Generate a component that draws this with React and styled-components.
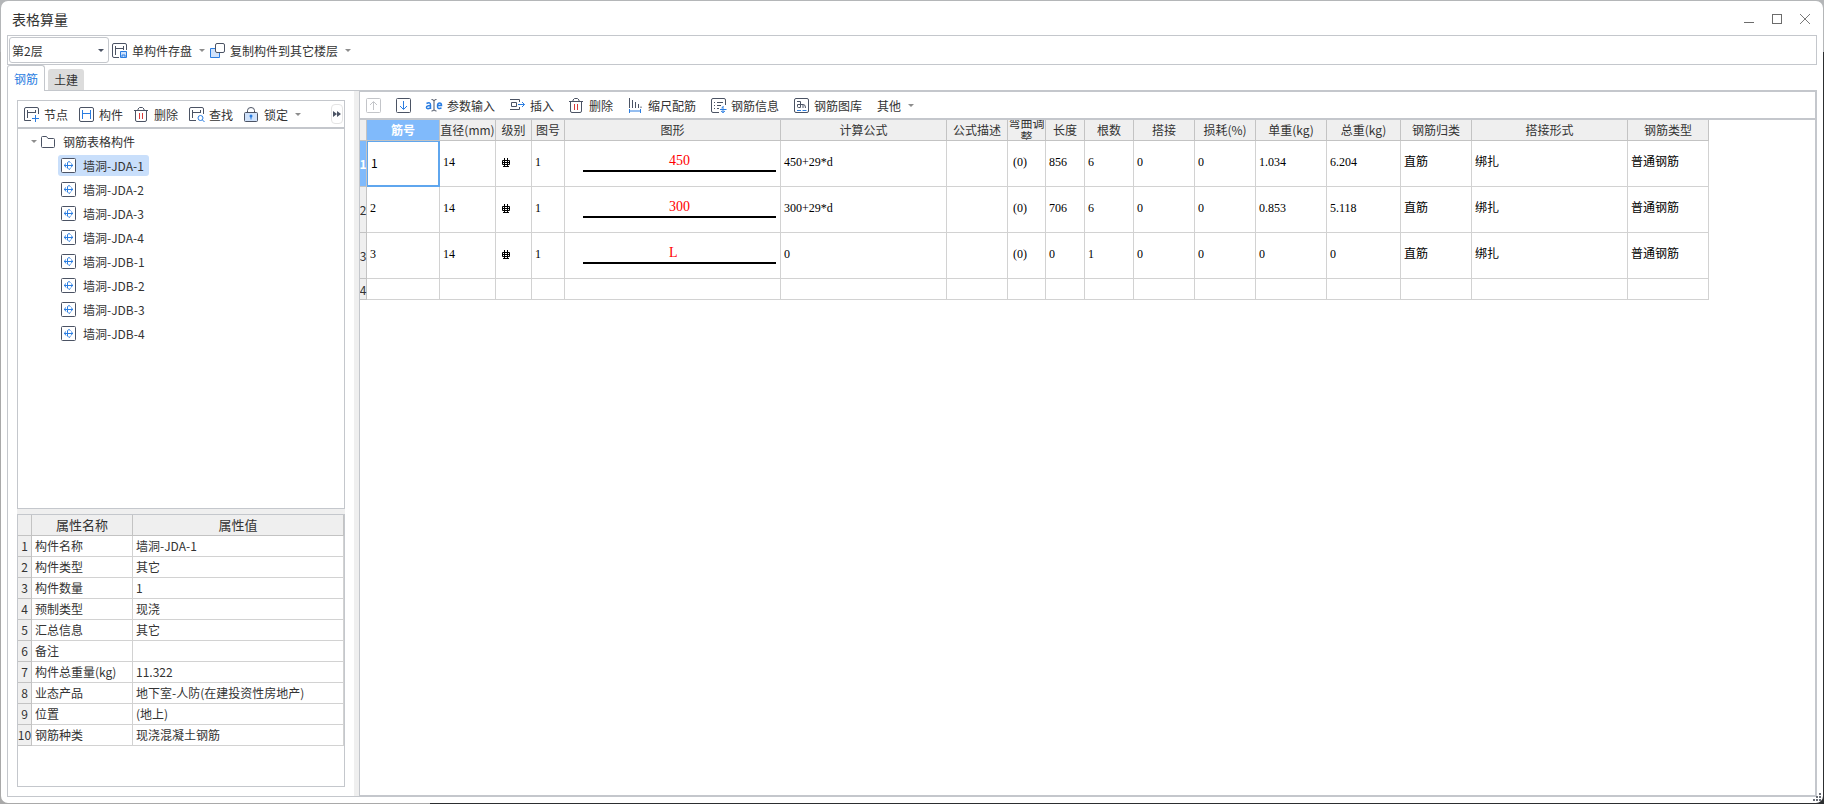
import React, { useState } from "react";
import styled, { createGlobalStyle, css } from "styled-components";

const GlobalStyle = createGlobalStyle`
  * {
    box-sizing: border-box;
  }
  body {
    margin: 0;
    font-family: "Noto Sans CJK SC", "Noto Sans", sans-serif;
    font-size: 12px;
    line-height: 15px;
    color: #333;
  }
  button, select {
    font: inherit;
    color: inherit;
  }
`;

const StyledDesktop = styled.div`
  position: relative;
  height: 100vh;
  padding: 1px;
  background: linear-gradient(#b4b6b8, #b4b6b8) top / 100% 52px no-repeat,
    linear-gradient(to right, #a9a9a9 430px, #2c2e30 430px);
`;

const StyledWindow = styled.main`
  display: flex;
  flex-direction: column;
  height: 100%;
  padding: 0 6px 6px;
  background-color: #fff;
  border-radius: 7px;
`;

const StyledTitleBar = styled.header`
  display: flex;
  flex: none;
  align-items: center;
  justify-content: space-between;
  height: 34px;
  padding-left: 5px;
`;

const StyledTitle = styled.h1`
  margin: 0;
  padding-top: 1px;
  font-size: 14px;
  font-weight: 400;
  line-height: 20px;
`;

const StyledWindowButtons = styled.div`
  display: flex;
  padding-top: 3px;
  margin-right: -2px;
`;

const StyledWindowButton = styled.button`
  width: 28px;
  height: 28px;
  padding: 0;
  border: 0;
  background: transparent;
`;

const StyledIcon = styled.svg`
  display: block;
  flex: none;
  margin: ${(props) => (props.$centered ? "0 auto" : "0")};
  fill: none;
  stroke: ${(props) => props.$color || "#4b5364"};
  overflow: visible;
`;

const StyledFloorBar = styled.div`
  display: flex;
  flex: none;
  align-items: center;
  height: 30px;
  padding-left: 1px;
  border: 1px solid #c4c7cc;
`;

const StyledFloorTools = styled.div`
  display: flex;
  gap: 5px;
`;

const StyledSelectBox = styled.label`
  position: relative;
  width: 100px;
  margin-right: 3px;
`;

const StyledSelect = styled.select`
  display: block;
  width: 100%;
  height: 26px;
  padding: 0 2px;
  border: 1px solid #c4c7cc;
  border-radius: 3px;
  background-color: #fff;
  appearance: none;
`;

const StyledArrow = styled.span`
  width: 0;
  height: 0;
  border: 3px solid transparent;
  border-bottom-width: 0;
  border-top-color: ${(props) => props.$color || "#8d8d8d"};
`;

const StyledSelectArrow = styled(StyledArrow)`
  position: absolute;
  right: 5px;
  top: 12px;
  pointer-events: none;
`;

const StyledToolButton = styled.button`
  display: flex;
  flex: none;
  align-items: center;
  gap: 5px;
  height: 24px;
  padding: 0;
  border: 0;
  background: transparent;
  white-space: nowrap;

  ${StyledArrow} {
    margin-left: 2px;
  }
`;

const StyledTabs = styled.div`
  display: flex;
  flex: none;
  align-items: flex-end;
  gap: 3px;
  height: 26px;
  border-bottom: 1px solid #c4c7cc;
`;

const StyledTab = styled.button`
  height: 21px;
  padding: 0 6px;
  border: 0;
  border-radius: 3px 3px 0 0;
  background-color: #dcdcdc;

  ${(props) =>
    props.$active &&
    css`
      height: 26px;
      margin-bottom: -1px;
      border: 1px solid #c4c7cc;
      border-bottom: 0;
      background-color: #fff;
      color: #2a7de1;
    `}
`;

const StyledBody = styled.div`
  display: flex;
  flex: 1;
  min-height: 0;
  border: 1px solid #c4c7cc;
  border-top: 0;
`;

const StyledSidebar = styled.aside`
  display: flex;
  flex-direction: column;
  flex: none;
  width: 346px;
  padding: 9px;
`;

const StyledSplitter = styled.div`
  flex: 0 0 5px;
  background-color: #efefef;
`;

const StyledPane = styled.section`
  display: flex;
  flex-direction: column;
  flex: ${(props) => props.$grow} 1 0;
  min-width: 0;
  min-height: 0;
  border: 1px solid #c4c7cc;
  overflow: hidden;
`;

const StyledToolbar = styled.div`
  display: flex;
  flex: none;
  align-items: center;
  gap: ${(props) => props.$gap};
  height: 28px;
  padding: 0 1px 0 6px;
  border-bottom: 2px solid #c4c7cc;
`;

const StyledMoreButton = styled.button`
  width: 12px;
  height: 20px;
  margin-left: auto;
  padding: 0;
  border: 1px solid #e4e4e4;
  border-radius: 4px;
  background-color: #fff;
`;

const StyledTree = styled.ul`
  margin: 0;
  padding: 0 0 0 ${(props) => (props.$nested ? "40px" : "0")};
  list-style-type: none;
`;

const StyledTreeFolder = styled.button`
  display: flex;
  align-items: center;
  height: 24px;
  padding: 0 0 0 13px;
  border: 0;
  background: transparent;

  svg {
    margin: 0 7px 0 4px;
  }
`;

const StyledTreeItem = styled.li`
  display: flex;
  align-items: center;
  height: 24px;
`;

const StyledTreeButton = styled.button`
  display: flex;
  align-items: center;
  gap: 7px;
  height: 21px;
  padding: 0 5px 0 3px;
  border: 0;
  border-radius: 3px;
  background-color: ${(props) => (props.$selected ? "#c9dffb" : "transparent")};
`;

const StyledTable = styled.table`
  table-layout: fixed;
  border-collapse: separate;
  border-spacing: 0;
  width: ${(props) => (props.$fill ? "100%" : "0")};
  flex: none;
`;

const StyledHead = styled.th`
  height: 21px;
  padding: 0;
  border-right: 1px solid #c3c3c3;
  border-bottom: 1px solid #c3c3c3;
  background-color: ${(props) => (props.$current ? "#80bafb" : "#efefef")};
  color: ${(props) => (props.$current ? "#fff" : "inherit")};
  font-size: ${(props) => (props.$large ? "13px" : "12px")};
  font-weight: ${(props) => (props.$current ? "700" : "400")};
`;

const StyledHeadText = styled.div`
  display: flex;
  align-items: center;
  justify-content: center;
  height: 20px;
  line-height: 14px;
  overflow: hidden;
  text-align: center;
`;

const StyledRowHead = styled(StyledHead)`
  height: auto;
`;

const StyledRowNumber = styled.div`
  display: flex;
  justify-content: center;
`;

const StyledPropertyCell = styled.td`
  height: 21px;
  padding: 0 3px;
  border-right: 1px solid #d2d2d2;
  border-bottom: 1px solid #d2d2d2;
  white-space: nowrap;
`;

const StyledRow = styled.tr`
  height: ${(props) => (props.$empty ? "21px" : "46px")};
`;

const StyledCell = styled.td`
  padding: 0 0 2px ${(props) => props.$indent || "3px"};
  border-right: 1px solid #d2d2d2;
  border-bottom: 1px solid #d2d2d2;
  color: #000;
  font-family: "Liberation Serif", "Noto Sans CJK SC", serif;
  white-space: nowrap;

  ${(props) =>
    props.$current &&
    css`
      border: 2px solid #5fa6ee;
      border-width: 1px 2px 2px 1px;
      font-family: "Noto Sans CJK SC", sans-serif;
    `}
`;

const StyledShape = styled.div`
  display: flex;
  flex-direction: column;
  align-items: center;
  gap: 2px;
  padding: 0 4px 0 15px;
  color: #f00;
  font-size: 14px;

  &::after {
    content: "";
    align-self: stretch;
    height: 2px;
    background-color: #000;
  }
`;

const StyledShapeSize = styled.span`
  min-width: 21px;
`;

const StyledGrip = styled.svg`
  position: absolute;
  right: 3px;
  bottom: 3px;
  fill: #686c74;
`;

const BLUE = "#2a7de1";

function Icon({ children, width = 15, color, centered }) {
  return (
    <StyledIcon
      width={width}
      height="15"
      viewBox={`0 0 ${width} 15`}
      $color={color}
      $centered={centered}
      aria-hidden="true"
    >
      {children}
    </StyledIcon>
  );
}

function SaveIcon() {
  return (
    <Icon>
      <path d="M7 14.5H2A1.5 1.5 0 0 1 .5 13V2A1.5 1.5 0 0 1 2 .5h11A1.5 1.5 0 0 1 14.5 2v5M3.5 3v9M3.5 5.5h8M11.5 3v4" />
      <path d="M8.5 8.5h6v6h-6zM10 14v-2h3v2" stroke={BLUE} fill="#cfe2fb" />
    </Icon>
  );
}

function CopyIcon() {
  return (
    <Icon>
      <path d="M5 5.5H.5v9H9.500V10" stroke={BLUE} fill="#cfe2fb" />
      <rect x="5.5" y=".5" width="9" height="9" rx="1.5" fill="#fff" />
    </Icon>
  );
}

function NodeIcon() {
  return (
    <Icon>
      <path d="M7 13.5H.5V2A1.5 1.5 0 0 1 2 .5h11A1.5 1.5 0 0 1 14.5 2v5M3.5 3v8M3.5 5.5h8M11.5 3v3" />
      <path d="M11.5 8v7M8 11.5h7" stroke={BLUE} />
    </Icon>
  );
}

function MemberIcon() {
  return (
    <Icon>
      <rect x=".5" y=".5" width="14" height="14" rx="1.5" />
      <path d="M3.5 3v9M11.5 3v9M3.5 6.5h8" stroke={BLUE} />
    </Icon>
  );
}

function TrashIcon() {
  return (
    <Icon>
      <path d="M0 3.5h14M4 3V2L5.5 .5h3L10 2v1M1.5 4v9A1.5 1.5 0 0 0 3 14.5h8A1.5 1.5 0 0 0 12.5 13V4" />
      <path d="M5.5 6v6M8.5 6v6" stroke="#d93a3a" />
    </Icon>
  );
}

function FindIcon() {
  return (
    <Icon>
      <path d="M7 13.5H.5V2A1.5 1.5 0 0 1 2 .5h11A1.5 1.5 0 0 1 14.5 2v5M3.5 3v8M3.5 5.5h8M11.5 3v3" />
      <circle cx="11.5" cy="11" r="2.5" stroke={BLUE} />
      <path d="M13.5 13l2 2" stroke={BLUE} />
    </Icon>
  );
}

function LockIcon() {
  return (
    <Icon>
      <rect x=".5" y="5.5" width="13" height="9" rx="1" fill="#cfe2fb" />
      <path d="M3.5 5V3.5a3.5 3 0 0 1 7 0V5" />
      <path d="M7 9v3.5" stroke={BLUE} />
      <circle cx="7" cy="9" r="1.5" fill={BLUE} stroke="none" />
    </Icon>
  );
}

function FolderIcon() {
  return (
    <Icon>
      <path d="M.5 12.5v-9A1 1 0 0 1 1.5 2.5h4l1.500 2h5.5a1 1 0 0 1 1 1v7a1 1 0 0 1-1 1h-11a1 1 0 0 1-1-1z" />
    </Icon>
  );
}

function HoleIcon() {
  return (
    <Icon>
      <rect x=".5" y=".5" width="14" height="14" rx="1" fill="#fff" />
      <path
        d="M3 7.5h9M4.500 5.5Q2.500 7.500 5 9.500M10.500 5.5Q12.500 7.500 10 9.500M9.500 4.500L8 3.500 6.500 4.500V10L8 11.500 9.500 10.500"
        stroke={BLUE}
      />
    </Icon>
  );
}

function MoveUpIcon() {
  return (
    <Icon color="#c3c5c9">
      <rect x=".5" y=".5" width="14" height="14" rx="1" />
      <path d="M7.5 12V4M4 7l3.5-3.5L11 7" />
    </Icon>
  );
}

function MoveDownIcon() {
  return (
    <Icon>
      <rect x=".5" y=".5" width="14" height="14" rx="1" />
      <path d="M7.5 3v8M4 8l3.5 3.5L11 8" stroke={BLUE} />
    </Icon>
  );
}

function ParamIcon() {
  return (
    <Icon width={16}>
      <path
        d="M.5 5.500Q4.500 3.500 4.500 7v4M4.500 7.500Q.5 7.500.5 9.500T4.500 10M11.500 7.500h4Q15.500 5 13.500 5T11.500 8t2 2.500l2-.5"
        stroke={BLUE}
        strokeWidth="1.500"
      />
      <path d="M5.500 1.500Q8 1.500 8 3v8.500Q8 13 5.500 13M10.500 1.500Q8 1.500 8 3M8 11.500Q8 13 10.500 13" />
    </Icon>
  );
}

function InsertIcon() {
  return (
    <Icon>
      <path d="M0 1.5h9.5V4M0 11.5h9.5V9M1.5 4.5h5v4h-5z" />
      <path d="M8 6.5h6.5M12 4l2.5 2.5L12 9" stroke={BLUE} />
    </Icon>
  );
}

function ScaleIcon() {
  return (
    <Icon>
      <path d="M1.5 0v10M4.5 2v8M7.5 4v6M10.5 6v4M13 8.5v1.5" />
      <path d="M1 13h12M1.5 11v4M12.5 11v4" stroke={BLUE} />
    </Icon>
  );
}

function InfoIcon() {
  return (
    <Icon>
      <path d="M8 14.5H2A1.5 1.5 0 0 1 .5 13V2A1.5 1.5 0 0 1 2 .5h11A1.5 1.5 0 0 1 14.5 2v5M3 4.5h1M6 4.5h6M3 7.5h1M6 7.5h4M3 10.5h1M6 10.5h2" />
      <path d="M12.5 8.500L10.5 10M12 8.500v6.500M9 11.500h6.500M10 13l2 1.500 2-1.500" stroke={BLUE} />
    </Icon>
  );
}

function LibraryIcon() {
  return (
    <Icon>
      <rect x=".5" y=".5" width="14" height="14" rx="1.5" />
      <path d="M3 3.5h3.5v6H4.500a1 1 0 0 1-1-1V6.500h6Q11.500 6.500 11.500 10M9 6.500V10" />
      <path d="M3 12.5h4M8.5 12.5h4" stroke={BLUE} />
    </Icon>
  );
}

// Rebar grade mark: a ring crossed by two bars, standing on a base line
function GradeMark() {
  return (
    <StyledIcon width="10" height="10" viewBox="0 0 10 10" $color="#000" role="img" aria-label="HRB400">
      <path d="M3.5 0v9M6.500 0v9M1.500 2.5h7v4h-7zM1 4.5h8M2 8.500h6" />
    </StyledIcon>
  );
}

const treeItems = [
  "墙洞-JDA-1",
  "墙洞-JDA-2",
  "墙洞-JDA-3",
  "墙洞-JDA-4",
  "墙洞-JDB-1",
  "墙洞-JDB-2",
  "墙洞-JDB-3",
  "墙洞-JDB-4",
];

const properties = [
  ["构件名称", "墙洞-JDA-1"],
  ["构件类型", "其它"],
  ["构件数量", "1"],
  ["预制类型", "现浇"],
  ["汇总信息", "其它"],
  ["备注", ""],
  ["构件总重量(kg)", "11.322"],
  ["业态产品", "地下室-人防(在建投资性房地产)"],
  ["位置", "(地上)"],
  ["钢筋种类", "现浇混凝土钢筋"],
];

const columns = [
  { key: "no", title: "筋号", width: 73 },
  { key: "diameter", title: "直径(mm)", width: 56 },
  { key: "grade", title: "级别", width: 36, indent: "5px" },
  { key: "figure", title: "图号", width: 33 },
  { key: "shape", title: "图形", width: 216 },
  { key: "formula", title: "计算公式", width: 166 },
  { key: "note", title: "公式描述", width: 61 },
  { key: "bend", title: "弯曲调整", width: 38, indent: "5px" },
  { key: "length", title: "长度", width: 39 },
  { key: "count", title: "根数", width: 49 },
  { key: "lap", title: "搭接", width: 61 },
  { key: "loss", title: "损耗(%)", width: 61 },
  { key: "unitWeight", title: "单重(kg)", width: 71 },
  { key: "totalWeight", title: "总重(kg)", width: 74 },
  { key: "category", title: "钢筋归类", width: 71 },
  { key: "lapType", title: "搭接形式", width: 156 },
  { key: "type", title: "钢筋类型", width: 81 },
];

const common = {
  diameter: "14",
  figure: "1",
  note: "",
  bend: "(0)",
  lap: "0",
  loss: "0",
  category: "直筋",
  lapType: "绑扎",
  type: "普通钢筋",
};

const bars = [
  { ...common, no: "1", shape: "450", formula: "450+29*d", length: "856", count: "6", unitWeight: "1.034", totalWeight: "6.204" },
  { ...common, no: "2", shape: "300", formula: "300+29*d", length: "706", count: "6", unitWeight: "0.853", totalWeight: "5.118" },
  { ...common, no: "3", shape: "L", formula: "0", length: "0", count: "1", unitWeight: "0", totalWeight: "0" },
  null,
];

function renderCell(bar, key) {
  if (!bar) {
    return null;
  }
  if (key === "grade") {
    return <GradeMark />;
  }
  if (key === "shape") {
    return (
      <StyledShape>
        <StyledShapeSize>{bar.shape}</StyledShapeSize>
      </StyledShape>
    );
  }
  return bar[key];
}

function BarTable() {
  return (
    <StyledTable>
      <colgroup>
        <col width="7" />
        {columns.map((column) => (
          <col key={column.key} width={column.width} />
        ))}
      </colgroup>
      <thead>
        <tr>
          <StyledHead aria-label="序号" />
          {columns.map((column, index) => (
            <StyledHead key={column.key} scope="col" $current={index === 0}>
              <StyledHeadText>{column.title}</StyledHeadText>
            </StyledHead>
          ))}
        </tr>
      </thead>
      <tbody>
        {bars.map((bar, row) => (
          <StyledRow key={row} $empty={!bar}>
            <StyledRowHead scope="row" $current={row === 0}>
              <StyledRowNumber>{row + 1}</StyledRowNumber>
            </StyledRowHead>
            {columns.map((column, index) => (
              <StyledCell
                key={column.key}
                $indent={column.indent}
                $current={row === 0 && index === 0}
              >
                {renderCell(bar, column.key)}
              </StyledCell>
            ))}
          </StyledRow>
        ))}
      </tbody>
    </StyledTable>
  );
}

function PropertyTable() {
  return (
    <StyledTable $fill>
      <colgroup>
        <col width="14" />
        <col width="101" />
        <col />
      </colgroup>
      <thead>
        <tr>
          <StyledHead aria-label="序号" />
          <StyledHead scope="col" $large>
            属性名称
          </StyledHead>
          <StyledHead scope="col" $large>
            属性值
          </StyledHead>
        </tr>
      </thead>
      <tbody>
        {properties.map(([name, value], index) => (
          <tr key={name}>
            <StyledRowHead scope="row">
              <StyledRowNumber>{index + 1}</StyledRowNumber>
            </StyledRowHead>
            <StyledPropertyCell>{name}</StyledPropertyCell>
            <StyledPropertyCell>{value}</StyledPropertyCell>
          </tr>
        ))}
      </tbody>
    </StyledTable>
  );
}

export default function App() {
  const [tab, setTab] = useState("钢筋");
  const [selected, setSelected] = useState(treeItems[0]);

  return (
    <StyledDesktop>
      <GlobalStyle />
      <StyledWindow>
        <StyledTitleBar>
          <StyledTitle>表格算量</StyledTitle>
          <StyledWindowButtons>
            <StyledWindowButton aria-label="最小化">
              <Icon centered color="#6c6c6c">
                <path d="M2 10.5h10" />
              </Icon>
            </StyledWindowButton>
            <StyledWindowButton aria-label="最大化">
              <Icon centered color="#6c6c6c">
                <rect x="2.5" y="2.5" width="9" height="9" />
              </Icon>
            </StyledWindowButton>
            <StyledWindowButton aria-label="关闭">
              <Icon centered color="#7a7a7a">
                <path d="M2 2l10 10M12 2L2 12" />
              </Icon>
            </StyledWindowButton>
          </StyledWindowButtons>
        </StyledTitleBar>

        <StyledFloorBar>
          <StyledSelectBox>
            <StyledSelect aria-label="楼层" defaultValue="第2层">
              <option>第2层</option>
            </StyledSelect>
            <StyledSelectArrow $color="#4b5364" />
          </StyledSelectBox>
          <StyledFloorTools>
            <StyledToolButton>
              <SaveIcon />
              单构件存盘
              <StyledArrow />
            </StyledToolButton>
            <StyledToolButton>
              <CopyIcon />
              复制构件到其它楼层
              <StyledArrow />
            </StyledToolButton>
          </StyledFloorTools>
        </StyledFloorBar>

        <StyledTabs role="tablist">
          {["钢筋", "土建"].map((name) => (
            <StyledTab
              key={name}
              role="tab"
              aria-selected={tab === name}
              $active={tab === name}
              onClick={() => setTab(name)}
            >
              {name}
            </StyledTab>
          ))}
        </StyledTabs>

        <StyledBody>
          <StyledSidebar>
            <StyledPane $grow={3}>
              <StyledToolbar $gap="11px">
                <StyledToolButton>
                  <NodeIcon />
                  节点
                </StyledToolButton>
                <StyledToolButton>
                  <MemberIcon />
                  构件
                </StyledToolButton>
                <StyledToolButton>
                  <TrashIcon />
                  删除
                </StyledToolButton>
                <StyledToolButton>
                  <FindIcon />
                  查找
                </StyledToolButton>
                <StyledToolButton>
                  <LockIcon />
                  锁定
                  <StyledArrow />
                </StyledToolButton>
                <StyledMoreButton aria-label="更多">
                  <StyledIcon width="10" height="6" viewBox="0 0 10 6" $color="none">
                    <path d="M1 0l4 3-4 3zM5 0l4 3-4 3z" fill="#4b5364" />
                  </StyledIcon>
                </StyledMoreButton>
              </StyledToolbar>
              <StyledTree>
                <li>
                  <StyledTreeFolder>
                    <StyledArrow />
                    <FolderIcon />
                    钢筋表格构件
                  </StyledTreeFolder>
                  <StyledTree $nested>
                    {treeItems.map((item) => (
                      <StyledTreeItem key={item}>
                        <StyledTreeButton
                          $selected={selected === item}
                          onClick={() => setSelected(item)}
                        >
                          <HoleIcon />
                          {item}
                        </StyledTreeButton>
                      </StyledTreeItem>
                    ))}
                  </StyledTree>
                </li>
              </StyledTree>
            </StyledPane>
            <StyledSplitter />
            <StyledPane $grow={2}>
              <PropertyTable />
            </StyledPane>
          </StyledSidebar>
          <StyledSplitter />
          <StyledPane $grow={1}>
            <StyledToolbar $gap="15px">
              <StyledToolButton aria-label="上移" disabled>
                <MoveUpIcon />
              </StyledToolButton>
              <StyledToolButton aria-label="下移">
                <MoveDownIcon />
              </StyledToolButton>
              <StyledToolButton>
                <ParamIcon />
                参数输入
              </StyledToolButton>
              <StyledToolButton>
                <InsertIcon />
                插入
              </StyledToolButton>
              <StyledToolButton>
                <TrashIcon />
                删除
              </StyledToolButton>
              <StyledToolButton>
                <ScaleIcon />
                缩尺配筋
              </StyledToolButton>
              <StyledToolButton>
                <InfoIcon />
                钢筋信息
              </StyledToolButton>
              <StyledToolButton>
                <LibraryIcon />
                钢筋图库
              </StyledToolButton>
              <StyledToolButton>
                其他
                <StyledArrow />
              </StyledToolButton>
            </StyledToolbar>
            <BarTable />
          </StyledPane>
        </StyledBody>
      </StyledWindow>
      <StyledGrip width="8" height="8" viewBox="0 0 8 8" aria-hidden="true">
        <path d="M6 0h2v2H6zM3 3h2v2H3zM6 3h2v2H6zM0 6h2v2H0zM3 6h2v2H3zM6 6h2v2H6z" />
      </StyledGrip>
    </StyledDesktop>
  );
}
